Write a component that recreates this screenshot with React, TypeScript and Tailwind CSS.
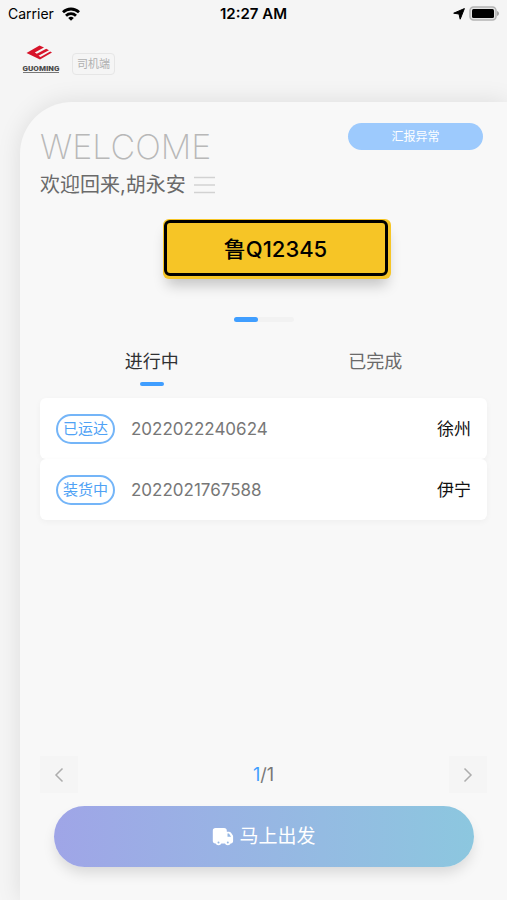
import React, { useState } from "react";

const orders = [
  { id: "2022022240624", status: "已运达", city: "徐州" },
  { id: "2022021767588", status: "装货中", city: "伊宁" },
];

const tabs = ["进行中", "已完成"];

const StatusBar = () => (
  <div className="grid grid-cols-3 items-center h-7 px-2 text-sm text-black">
    <div className="flex items-center gap-2">
      <span>Carrier</span>
      <svg viewBox="0 0 18 14" className="w-[18px] h-[14px]" fill="none" stroke="currentColor" strokeWidth="2.8">
        <path d="M1 5.2a11.6 11.6 0 0 1 16 0" />
        <path d="M4 8.7a7.2 7.2 0 0 1 10 0" />
        <path d="M9 13.8 6.2 11a4 4 0 0 1 5.6 0z" fill="currentColor" stroke="none" />
      </svg>
    </div>
    <span className="text-center text-[15px] font-semibold">12:27 AM</span>
    <div className="flex items-center justify-end gap-1">
      <svg viewBox="0 0 12 12" className="w-3 h-3" fill="currentColor">
        <path d="M11.4.6 7.2 11.2 6 6 .7 5.2z" stroke="currentColor" strokeWidth="1" strokeLinejoin="round" />
      </svg>
      <svg viewBox="0 0 30 16" className="w-[30px] h-4">
        <rect x="1" y="1" width="26" height="13" rx="3.5" fill="#e4e4e4" stroke="#b4b4b4" strokeWidth="1.5" />
        <rect x="3" y="3" width="22" height="9" rx="1.5" fill="#000" />
        <path d="M28 5c1.4.6 2 1.5 2 2.5s-.6 1.9-2 2.5z" fill="#a6a6a6" />
      </svg>
    </div>
  </div>
);

const Logo = () => (
  <svg viewBox="0 0 38 30" className="w-[38px] h-[30px]" role="img" aria-label="GUOMING">
    <path d="M4.500 8 17.500.5 22 2.600 12.800 7.500 14.800 8.800 24.200 3.800 27 5.200 16.500 10.800 18.500 12 28.200 6.600 30 7.500 18 14.500z" fill="#d7142a" />
    <text
      x="19"
      y="26"
      textAnchor="middle"
      fontFamily="Roboto, sans-serif"
      fontSize="8"
      fontWeight="900"
      fill="#4a4a4a"
    >
      GUOMING
    </text>
    <path d="M1 27.500h36" stroke="#777" strokeWidth="1" />
  </svg>
);

const TruckIcon = () => (
  <svg viewBox="0 0 22 18" className="w-[22px] h-[18px]">
    <path
      d="M3.5 0H12a2.800 2.800 0 0 1 2.800 2.800v.9h2c1 0 1.800.4 2.400 1.200l1.400 2c.3.5.5 1 .5 1.600v4.700c0 1.200-.9 2.300-2.200 2.300H3.500A2.700 2.700 0 0 1 .8 12.800V2.800A2.800 2.800 0 0 1 3.500 0z"
      fill="#fff"
    />
    <path d="M15.500 5.500h1.400l2.200 3.300h-3.600z" fill="#95b7e3" />
    <circle cx="6.500" cy="14.500" r="2.800" fill="#fff" />
    <circle cx="15.800" cy="14.500" r="2.800" fill="#fff" />
    <circle cx="6.500" cy="14.500" r="1" fill="#95b7e3" />
    <circle cx="15.800" cy="14.500" r="1" fill="#95b7e3" />
  </svg>
);

const Chevron = ({ d }: { d: string }) => (
  <svg viewBox="0 0 10 16" className="w-[10px] h-4" fill="none" stroke="#adadad" strokeWidth="1.5">
    <path d={d} />
  </svg>
);

const App = () => {
  const [active, setActive] = useState(0);

  return (
    <div className="min-h-screen flex flex-col overflow-hidden bg-[#f5f5f5] font-[Inter,'Noto_Sans_CJK_SC',sans-serif]">
      <StatusBar />

      {/* Brand */}
      <header className="flex items-end gap-3 pl-[22px] pt-[17px] pb-[27px]">
        <Logo />
        <span className="px-1 text-[11px] leading-5 text-[#b0b0b0] border border-[#e6e6e6] rounded">司机端</span>
      </header>

      <main className="flex-1 flex flex-col ml-5 px-5 pt-[21px] pb-[33px] bg-[#f8f8f8] rounded-tl-[52px] shadow-[0_0_24px_rgba(0,0,0,0.1)]">
        {/* Greeting */}
        <div className="flex items-start justify-between pr-1">
          <div>
            <h1 className="pt-1 text-[34px] leading-10 font-extralight text-[#b8b8b8]">WELCOME</h1>
            <div className="flex items-center gap-2">
              <p className="text-[20px] leading-9 text-[#6a6a6a]">欢迎回来,胡永安</p>
              <button aria-label="菜单">
                <svg viewBox="0 0 21 18" className="w-[21px] h-[18px]" stroke="#d2d2d2" strokeWidth="1.5">
                  <path d="M0 1.5h21M0 9h21M0 16.5h21" />
                </svg>
              </button>
            </div>
          </div>
          <button className="w-[135px] h-[27px] rounded-full bg-[#9dcafd] text-xs text-white">汇报异常</button>
        </div>

        {/* Plate */}
        <div className="flex justify-center pl-[26px] mt-4">
          <div className="w-[228px] h-[60px] pt-px pl-px pr-[3px] pb-[3px] rounded-md bg-[#f6c526] shadow-[0_10px_14px_-4px_rgba(0,0,0,0.22)]">
            <div className="h-full flex items-center justify-center pt-0.5 border-[3px] border-black rounded-md text-[22px] font-medium text-black">
              鲁Q12345
            </div>
          </div>
        </div>
        <div className="w-[60px] h-[5px] mx-auto mt-[38px] rounded-full bg-[#f2f2f2]">
          <div className="w-6 h-full rounded-full bg-[#409eff]" />
        </div>

        {/* Tabs */}
        <div className="grid grid-cols-2 mt-6" role="tablist">
          {tabs.map((tab, index) => (
            <button
              key={tab}
              role="tab"
              aria-selected={active === index}
              onClick={() => setActive(index)}
              className={`flex flex-col items-center gap-1 h-[52px] text-[18px] leading-8 ${
                active === index ? "text-[#303133]" : "text-[#6a6a6a]"
              }`}
            >
              {tab}
              {active === index && <span className="w-6 h-1 rounded-full bg-[#409eff]" />}
            </button>
          ))}
        </div>

        {/* Orders */}
        <ul>
          {orders.map((order) => (
            <li
              key={order.id}
              className="flex items-center h-[61px] px-4 bg-white rounded-md shadow-[0_2px_6px_rgba(0,0,0,0.04)]"
            >
              <span className="w-[59px] h-[30px] flex items-center justify-center pt-0.5 rounded-full border-2 border-[#74b5f8] text-[15px] text-[#4fa2f5]">
                {order.status}
              </span>
              <span className="pt-0.5 ml-4 text-[17px] text-[#777]">{order.id}</span>
              <span className="pt-0.5 ml-auto text-[17px] text-[#111]">{order.city}</span>
            </li>
          ))}
        </ul>

        {/* Pager */}
        <div className="flex items-center justify-between mt-auto">
          <button aria-label="上一页" className="w-[38px] h-[37px] flex items-center justify-center bg-[#f5f5f5]">
            <Chevron d="M8.5 1.5 2 8l6.5 6.5" />
          </button>
          <span className="text-[18px] text-[#777]">
            <span className="text-[#409eff]">1</span>/1
          </span>
          <button aria-label="下一页" className="w-[38px] h-[37px] flex items-center justify-center bg-[#f5f5f5]">
            <Chevron d="M1.500 1.500 8 8l-6.500 6.500" />
          </button>
        </div>

        <button className="flex items-center justify-center gap-[5px] h-[61px] ml-[14px] mr-[13px] mt-[13px] rounded-full bg-linear-to-r from-[#9fa5e7] to-[#8cc7df] text-[19px] text-white shadow-[0_8px_14px_-2px_rgba(0,0,0,0.13)]">
          <TruckIcon />
          <span className="pt-0.5">马上出发</span>
        </button>
      </main>
    </div>
  );
};

export default App;
